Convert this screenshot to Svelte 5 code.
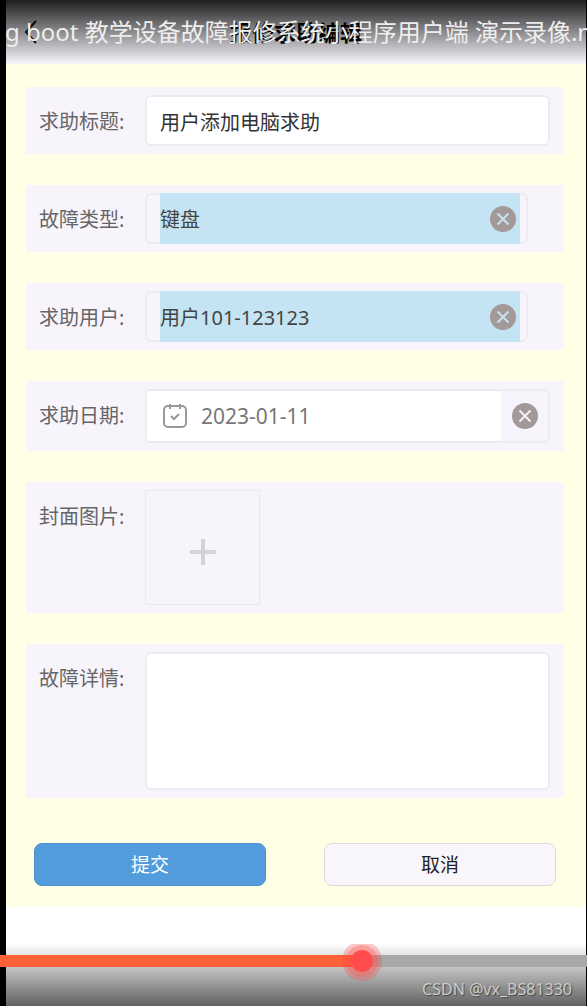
<script>
  let title = $state('用户添加电脑求助');
  let faultType = $state('键盘');
  let user = $state('用户101-123123');
  let date = $state('2023-01-11');
  let detail = $state('');
  let progress = $state(62.2);
</script>

{#snippet cross()}
  <svg viewBox="0 0 26 26" width="26" height="26" aria-hidden="true">
    <circle cx="13" cy="13" r="13" fill="#a39999" />
    <path d="M7.500 7.500l11 11M18.500 7.500l-11 11" fill="none" stroke="currentColor" stroke-width="2" />
  </svg>
{/snippet}

<div class="player">
  <div class="screen">
    <header class="nav">
      <button class="back" aria-label="返回">
        <svg viewBox="0 0 14 24" width="14" height="24" aria-hidden="true">
          <path d="M12 1L2 12l10 11" fill="none" stroke="#111" stroke-width="2" />
        </svg>
      </button>
      <h1>报修求助编辑</h1>
    </header>

    <form onsubmit={(e) => e.preventDefault()}>
      <div class="row">
        <label for="title">求助标题:</label>
        <input id="title" class="box text" type="text" bind:value={title} />
      </div>

      <div class="row">
        <label for="type">故障类型:</label>
        <div class="box picker">
          <div class="marked">
            <input id="type" type="text" bind:value={faultType} />
            <button type="button" class="clear" aria-label="清除" onclick={() => (faultType = '')}>{@render cross()}</button>
          </div>
        </div>
      </div>

      <div class="row">
        <label for="user">求助用户:</label>
        <div class="box picker">
          <div class="marked">
            <input id="user" type="text" bind:value={user} />
            <button type="button" class="clear" aria-label="清除" onclick={() => (user = '')}>{@render cross()}</button>
          </div>
        </div>
      </div>

      <div class="row">
        <label for="date">求助日期:</label>
        <div class="box date">
          <div class="value">
            <svg viewBox="0 0 24 24" width="24" height="24" fill="none" stroke="#999" stroke-width="2" aria-hidden="true">
              <rect x="1" y="2" width="22" height="21" rx="4" />
              <path d="M7 0v5M17 0v5M8 12l3 3 5-5" />
            </svg>
            <input id="date" type="text" bind:value={date} />
          </div>
          <button type="button" class="clear" aria-label="清除" onclick={() => (date = '')}>{@render cross()}</button>
        </div>
      </div>

      <div class="row">
        <label for="cover">封面图片:</label>
        <button id="cover" type="button" class="upload" aria-label="添加图片">
          <svg viewBox="0 0 26 26" width="26" height="26" aria-hidden="true">
            <path d="M13 0v26M0 13h26" stroke="#d5d3d8" stroke-width="4" />
          </svg>
        </button>
      </div>

      <div class="row">
        <label for="detail">故障详情:</label>
        <textarea id="detail" class="box" bind:value={detail}></textarea>
      </div>

      <div class="actions">
        <button type="submit" class="primary">提交</button>
        <button type="button">取消</button>
      </div>
    </form>
  </div>

  <div class="top">g boot 教学设备故障报修系统小程序用户端 演示录像.mp4</div>

  <div class="bottom">
    <input
      class="seek"
      type="range"
      min="0"
      max="100"
      step="0.1"
      aria-label="播放进度"
      bind:value={progress}
      style="--played: {progress}%"
    />
    <div class="mark">CSDN @vx_BS81330</div>
  </div>
</div>

<style>
  :global(body) {
    margin: 0;
    background: #000;
  }

  .player,
  .player * {
    box-sizing: border-box;
  }

  .player {
    position: relative;
    display: flex;
    min-height: 100vh;
    padding: 0 1px 0 6px;
    overflow: hidden;
    background: #000;
    font-family: 'Noto Sans', 'Noto Sans CJK SC', sans-serif;
    font-size: 20px;
  }

  .screen {
    flex: 1;
    min-width: 0;
    background: #fff;
  }

  button,
  input,
  textarea {
    margin: 0;
    padding: 0;
    border: 0;
    background: none;
    font: inherit;
    color: inherit;
    outline: 0;
  }

  svg {
    display: block;
  }

  .nav {
    display: grid;
    grid-template-columns: 36px 1fr 36px;
    align-items: center;
    height: 64px;
    padding: 0 18px;
    background: #f8f6fb;
  }

  h1 {
    margin: 0;
    font-size: 22px;
    line-height: 32px;
    font-weight: 700;
    text-align: center;
    color: #000;
  }

  form {
    display: flex;
    flex-direction: column;
    gap: 31px;
    padding: 23px 22px 21px 20px;
    background: #ffffe6;
  }

  .row {
    display: flex;
    align-items: stretch;
    padding: 8px 14px 8px 13px;
    background: #f7f4fc;
  }

  label {
    flex: 0 0 106px;
    line-height: 53px;
    height: 51px;
    color: #666;
  }

  .box {
    flex: 1;
    min-width: 0;
    min-height: 51px;
    border: 2px solid #edeaf1;
    border-radius: 6px;
    color: #333;
  }

  .text {
    padding: 2px 13px 0;
    background: #fff;
  }

  .picker {
    display: flex;
    margin-right: 22px;
    padding: 0 6px 0 13px;
  }

  .marked {
    flex: 1;
    display: flex;
    align-items: center;
    margin: -2px 0;
    padding-right: 4px;
    background: #c4e4f3;
    color: #444;
  }

  .marked input,
  .date input {
    flex: 1;
    min-width: 0;
  }

  .clear {
    color: #c9e2ef;
  }

  .date {
    display: flex;
    align-items: center;
    min-height: 54px;
    padding-right: 12px;
  }

  .value {
    flex: 1;
    align-self: stretch;
    display: flex;
    align-items: center;
    gap: 14px;
    margin-right: 11px;
    padding-left: 16px;
    border-radius: 4px;
    background: #fff;
    color: #777;
    font-size: 21px;
  }

  .date .clear {
    color: #f5f2f8;
  }

  .upload {
    display: grid;
    place-items: center;
    width: 115px;
    height: 115px;
    padding-top: 8px;
    border: 1px solid #ebe9ee;
  }

  textarea {
    display: block;
    height: 138px;
    padding: 10px 13px;
    background: #fff;
    resize: none;
  }

  .actions {
    display: grid;
    grid-template-columns: 1fr 1fr;
    gap: 58px;
    padding: 14px 8px 0;
  }

  .actions button {
    height: 43px;
    padding-bottom: 2px;
    border: 1px solid #dddbe0;
    border-radius: 8px;
    background: #f8f6fa;
    color: #222;
    font-size: 19px;
  }

  .actions .primary {
    border-color: #4a8fcb;
    background: #539cdc;
    color: #fff;
  }

  .top {
    position: absolute;
    inset: 0 0 auto 0;
    height: 64px;
    padding-left: 5px;
    overflow: hidden;
    white-space: nowrap;
    font-size: 24px;
    line-height: 64px;
    color: #eee;
    background: linear-gradient(rgba(0, 0, 0, 0.88), rgba(0, 0, 0, 0));
  }

  .bottom {
    position: absolute;
    inset: auto 0 0 0;
    height: 62px;
    padding-top: 11px;
    overflow: hidden;
    background: linear-gradient(rgba(0, 0, 0, 0), rgba(0, 0, 0, 0.62));
  }

  .seek {
    display: block;
    width: 100%;
    height: 12px;
    appearance: none;
    background: linear-gradient(to right, #ff5f39 var(--played), #a8a8a8 var(--played));
  }

  .seek::-webkit-slider-thumb {
    appearance: none;
    width: 22px;
    height: 22px;
    border-radius: 50%;
    background: #ff4d4d;
    box-shadow:
      0 0 0 5px rgba(255, 77, 77, 0.3),
      0 0 0 9px rgba(255, 77, 77, 0.3);
  }

  .mark {
    padding-right: 15px;
    text-align: right;
    font-size: 16px;
    line-height: 44px;
    color: #ccc;
    text-shadow: 1px 1px 1px #444;
  }
</style>
